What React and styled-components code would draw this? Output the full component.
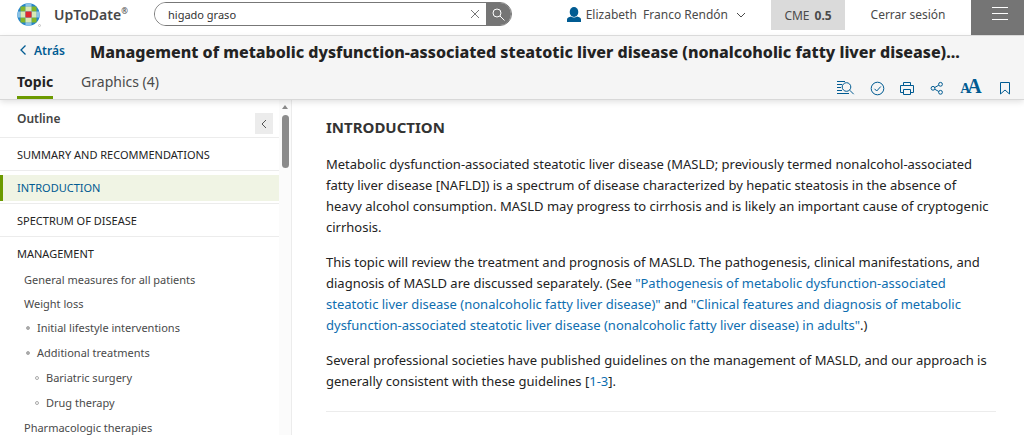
import React from "react";
import styled, { createGlobalStyle } from "styled-components";

const GlobalStyle = createGlobalStyle`
  * {
    box-sizing: border-box;
  }
  body {
    margin: 0;
    background: #fff;
    color: #232323;
    font-family: "Noto Sans", "Open Sans", sans-serif;
    font-size: 13px;
  }
  button {
    border: 0;
    padding: 0;
    background: none;
    color: inherit;
    font: inherit;
    cursor: pointer;
  }
  a {
    color: #005b92;
    text-decoration: none;
  }
  ul {
    list-style: none;
    margin: 0;
    padding: 0;
  }
  svg {
    display: block;
    flex: none;
  }
`;

const Page = styled.div`
  display: flex;
  flex-direction: column;
  height: 100vh;
  overflow: hidden;
`;

const TopBar = styled.header`
  display: flex;
  align-items: flex-start;
  height: 36px;
  flex: none;
  border-bottom: 1px solid #e0e0e0;
  color: #4a4a4a;
`;

const Brand = styled.a`
  display: flex;
  align-items: center;
  gap: 13px;
  width: 154px;
  height: 29px;
  padding-left: 17px;
  color: #474747;
  font-size: 14px;
  font-weight: 600;
  sup {
    font-size: 8px;
    line-height: 12px;
    vertical-align: top;
  }
`;

const SearchForm = styled.form`
  display: flex;
  width: 35%;
  height: 24px;
  margin-top: 2px;
  border: 1px solid #777;
  border-radius: 12px;
  overflow: hidden;
`;

const SearchInput = styled.input`
  flex: 1;
  min-width: 0;
  border: 0;
  outline: 0;
  padding: 0 0 0 13px;
  color: #333;
  font-family: inherit;
  font-size: 11px;
`;

const ClearButton = styled.button`
  display: grid;
  place-items: center;
  width: 22px;
  color: #777;
`;

const SearchButton = styled.button`
  display: grid;
  place-items: center;
  width: 25px;
  background: #757575;
  color: #fff;
`;

const Account = styled.div`
  display: flex;
  align-items: flex-start;
  margin-left: auto;
`;

const UserButton = styled.button`
  display: flex;
  align-items: center;
  gap: 5px;
  height: 28px;
  margin-right: 24px;
  font-size: 12px;
  white-space: pre;
`;

const Credits = styled.a`
  display: flex;
  align-items: center;
  justify-content: center;
  gap: 5px;
  width: 74px;
  height: 30px;
  background: #dadada;
  color: #4a4a4a;
  font-size: 12px;
`;

const SignOut = styled.button`
  width: 126px;
  height: 28px;
  font-size: 12px;
`;

const MenuButton = styled.button`
  display: flex;
  justify-content: center;
  width: 53px;
  height: 35px;
  padding: 6px 0 0 4px;
  background: #757575;
  color: #fff;
`;

const TopicHeader = styled.div`
  position: relative;
  flex: none;
  background: #f5f5f5;
  border-bottom: 1px solid #d8d8d8;
  box-shadow: 0 2px 6px rgba(0, 0, 0, 0.12);
`;

const TitleRow = styled.div`
  display: flex;
  height: 32px;
  padding-left: 18px;
`;

const BackButton = styled.button`
  display: flex;
  align-items: center;
  gap: 6px;
  width: 72px;
  height: 28px;
  color: #005b92;
  font-size: 12px;
  font-weight: 600;
`;

const TopicTitle = styled.h1`
  margin: 0;
  font-size: 16px;
  font-weight: 800;
  line-height: 32px;
  white-space: nowrap;
`;

const TabRow = styled.div`
  display: flex;
  justify-content: space-between;
  height: 31px;
  padding: 0 11px 0 17px;
`;

const Tabs = styled.div`
  display: flex;
  gap: 28px;
`;

const Tab = styled.button`
  padding-bottom: 2px;
  border-bottom: 3px solid ${(props) => (props.$active ? "#6c9a00" : "transparent")};
  color: ${(props) => (props.$active ? "#232323" : "#4a4a4a")};
  font-size: 14px;
  font-weight: ${(props) => (props.$active ? 700 : 400)};
`;

const Tools = styled.div`
  display: flex;
  align-items: center;
  gap: 14px;
  padding-top: 8px;
  color: #005b92;
`;

const FontSizeButton = styled.button`
  width: 24px;
  font-family: "Liberation Serif", serif;
  font-size: 20px;
  font-weight: 700;
  line-height: 16px;
  white-space: nowrap;
  small {
    margin-right: -3px;
    font-size: 14px;
  }
`;

const Main = styled.div`
  display: flex;
  flex: 1;
  min-height: 0;
`;

const Sidebar = styled.aside`
  display: flex;
  width: 292px;
  flex: none;
  border-right: 1px solid #ececec;
`;

const Outline = styled.nav`
  flex: 1;
  overflow: hidden;
`;

const OutlineHead = styled.div`
  display: flex;
  justify-content: space-between;
  height: 38px;
  padding: 0 6px 0 17px;
  border-bottom: 1px solid #ececec;
`;

const OutlineTitle = styled.h2`
  margin: 0;
  color: #444;
  font-size: 12px;
  font-weight: 600;
  line-height: 38px;
`;

const CollapseButton = styled.button`
  display: grid;
  place-items: center;
  width: 18px;
  height: 21px;
  margin-top: 13px;
  background: #ececec;
  color: #555;
`;

const Section = styled.li`
  padding: 4px 0 2px;
  border-bottom: 1px solid ${(props) => (props.$open ? "transparent" : "#ececec")};
`;

const SectionLink = styled.a`
  display: block;
  padding-left: ${(props) => (props.$active ? 14 : 17)}px;
  border-left: ${(props) => (props.$active ? "3px solid #6c9a00" : "0")};
  background: ${(props) => (props.$active ? "#f0f4e4" : "transparent")};
  color: ${(props) => (props.$active ? "#005b92" : "#232323")};
  font-size: 11px;
  line-height: 26px;
`;

const indents = [24, 26, 35];

const SubItem = styled.li`
  display: flex;
  align-items: center;
  gap: 7px;
  height: ${(props) => (props.$level ? 25 : 24)}px;
  padding-left: ${(props) => indents[props.$level]}px;
  a {
    color: #4a4a4a;
    font-size: 11px;
  }
`;

const Bullet = styled.span`
  width: 4px;
  height: 4px;
  border: 1px solid #aaa;
  border-radius: 50%;
  background: ${(props) => (props.$hollow ? "#fff" : "#aaa")};
`;

const ScrollTrack = styled.div`
  display: flex;
  flex-direction: column;
  align-items: center;
  gap: 6px;
  width: 12px;
  padding-top: 5px;
  background: #fbfbfb;
  color: #8a8a8a;
`;

const ScrollThumb = styled.div`
  width: 7px;
  height: 53px;
  border-radius: 4px;
  background: #8b8b8b;
`;

const Article = styled.article`
  flex: 1;
  min-width: 0;
  padding: 17px 28px 0 34px;
  overflow: hidden;
  h2 {
    margin: 0 0 16px;
    color: #333;
    font-size: 15px;
    font-weight: 700;
    line-height: 21px;
  }
  p {
    margin: 0 0 14px;
    padding-right: 4px;
    line-height: 21px;
  }
  a {
    color: #0e6eb0;
  }
`;

const Divider = styled.hr`
  margin: 19px 0 0;
  border: 0;
  border-top: 1px solid #ececec;
`;

const sections = [
  { title: "SUMMARY AND RECOMMENDATIONS" },
  { title: "INTRODUCTION", active: true },
  { title: "SPECTRUM OF DISEASE" },
  { title: "MANAGEMENT", open: true },
];

const managementItems = [
  { title: "General measures for all patients", level: 0 },
  { title: "Weight loss", level: 0 },
  { title: "Initial lifestyle interventions", level: 1 },
  { title: "Additional treatments", level: 1 },
  { title: "Bariatric surgery", level: 2 },
  { title: "Drug therapy", level: 2 },
  { title: "Pharmacologic therapies", level: 0 },
];

const Icon = ({ width = 16, height = 16, children }) => (
  <svg
    width={width}
    height={height}
    viewBox={`0 0 ${width} ${height}`}
    fill="none"
    stroke="currentColor"
    aria-hidden="true"
  >
    {children}
  </svg>
);

const Logo = () => (
  <svg width="24" height="24" viewBox="0 0 24 24" aria-hidden="true">
    <defs>
      <clipPath id="globe">
        <circle cx="11.5" cy="11.5" r="11.3" />
      </clipPath>
    </defs>
    <g clipPath="url(#globe)">
      <path fill="#2786c8" d="M0 0h24v24H0z" />
      <path fill="#8cc3e6" d="M8.500 0h6v3.500h-6zM8.500 19.500h6V23h-6zM0 8.500h3.500v6H0zM19.500 8.500H23v6h-3.500z" />
      <path fill="#84b526" d="M3.500 3.500h5v5h-5zM14.500 3.500h5v5h-5zM3.500 14.500h5v5h-5zM14.500 14.500h5v5h-5z" />
      <path fill="#d9e8b4" d="M3.500 8.500h5v6h-5zM14.500 8.500h5v6h-5zM8.500 3.500h6v5h-6zM8.500 14.500h6v5h-6z" />
      <path fill="#e0272f" d="M8.500 8.500h6v6h-6z" />
    </g>
    <circle cx="22.500" cy="22.500" r="1" fill="none" stroke="#999" strokeWidth=".5" />
  </svg>
);

function Header() {
  return (
    <TopBar>
      <Brand href="#home">
        <Logo />
        <span>
          UpToDate<sup>®</sup>
        </span>
      </Brand>
      <SearchForm role="search" onSubmit={(e) => e.preventDefault()}>
        <SearchInput aria-label="Buscar" defaultValue="higado graso" />
        <ClearButton type="reset" aria-label="Borrar">
          <Icon width={10} height={10}>
            <path d="M1 1l8 8M9 1L1 9" />
          </Icon>
        </ClearButton>
        <SearchButton aria-label="Buscar">
          <Icon width={13} height={13}>
            <circle cx="5" cy="5" r="4" />
            <path d="M8 8l4.500 4.500" />
          </Icon>
        </SearchButton>
      </SearchForm>
      <Account>
        <UserButton>
          <svg width="14" height="15" viewBox="0 0 14 15" fill="#005b92" aria-hidden="true">
            <ellipse cx="7" cy="5" rx="4.300" ry="5" />
            <path d="M0 15v-2.500C0 10.500 2 10 4 9.500c2 1.300 4 1.300 6 0 2 .5 4 1 4 3V15z" />
          </svg>
          {"Elizabeth  Franco Rendón"}
          <Icon width={14} height={10}>
            <path d="M4 4l4 4 4-4" />
          </Icon>
        </UserButton>
        <Credits href="#cme">
          CME <b>0.5</b>
        </Credits>
        <SignOut>Cerrar sesión</SignOut>
        <MenuButton aria-label="Menú">
          <Icon width={18} height={16}>
            <path d="M1 1.500h16M1 7.500h16M1 13.500h16" />
          </Icon>
        </MenuButton>
      </Account>
    </TopBar>
  );
}

function TopicTools() {
  return (
    <Tools>
      <button aria-label="Find in topic">
        <Icon width={19} height={16}>
          <path d="M1 1.500h8M1 4.500h5M1 7.500h4M1 10.500h5M1 13.500h12" />
          <circle cx="10.500" cy="7" r="4.300" />
          <path d="M13.700 10.200l4 4" />
        </Icon>
      </button>
      <button aria-label="Mark as read">
        <Icon>
          <circle cx="8.500" cy="8.500" r="6.300" />
          <path d="M5.500 8.800l2.200 2.200L11.800 6.500" />
        </Icon>
      </button>
      <button aria-label="Print">
        <Icon>
          <path d="M4.500 5.500v-3h7v3M4 12.500H1.500v-7h13v7H12" />
          <path d="M4.500 9.500h7v5h-7z" />
        </Icon>
      </button>
      <button aria-label="Share">
        <Icon>
          <circle cx="4" cy="8.300" r="1.900" />
          <circle cx="11.500" cy="4.300" r="1.900" />
          <circle cx="11.500" cy="12.300" r="1.900" />
          <path d="M5.700 7.500l4.100-2.300M5.700 9.200l4.100 2.300" />
        </Icon>
      </button>
      <FontSizeButton aria-label="Font size">
        <small>A</small>A
      </FontSizeButton>
      <button aria-label="Bookmark">
        <Icon>
          <path d="M3.500 2.500h9v11.500L8 10l-4.500 4z" />
        </Icon>
      </button>
    </Tools>
  );
}

function OutlinePanel() {
  return (
    <Sidebar>
      <Outline aria-label="Outline">
        <OutlineHead>
          <OutlineTitle>Outline</OutlineTitle>
          <CollapseButton aria-label="Collapse outline">
            <Icon width={6} height={10}>
              <path d="M5 1L1 5l4 4" />
            </Icon>
          </CollapseButton>
        </OutlineHead>
        <ul>
          {sections.map((section) => (
            <Section key={section.title} $open={section.open}>
              <SectionLink href="#section" $active={section.active}>
                {section.title}
              </SectionLink>
              {section.open && (
                <ul>
                  {managementItems.map((item) => (
                    <SubItem key={item.title} $level={item.level}>
                      {item.level > 0 && <Bullet $hollow={item.level === 2} />}
                      <a href="#section">{item.title}</a>
                    </SubItem>
                  ))}
                </ul>
              )}
            </Section>
          ))}
        </ul>
      </Outline>
      <ScrollTrack>
        <svg width="6" height="4" viewBox="0 0 6 4" fill="currentColor" aria-hidden="true">
          <path d="M0 4l3-4 3 4z" />
        </svg>
        <ScrollThumb />
      </ScrollTrack>
    </Sidebar>
  );
}

function App() {
  return (
    <Page>
      <GlobalStyle />
      <Header />
      <TopicHeader>
        <TitleRow>
          <BackButton>
            <Icon width={10} height={12}>
              <path d="M7.500 1.500L3 6l4.500 4.500" strokeWidth="1.300" />
            </Icon>
            Atrás
          </BackButton>
          <TopicTitle>
            Management of metabolic dysfunction-associated steatotic liver disease
            (nonalcoholic fatty liver disease)...
          </TopicTitle>
        </TitleRow>
        <TabRow>
          <Tabs>
            <Tab $active>Topic</Tab>
            <Tab>Graphics (4)</Tab>
          </Tabs>
          <TopicTools />
        </TabRow>
      </TopicHeader>
      <Main>
        <OutlinePanel />
        <Article>
          <h2>INTRODUCTION</h2>
          <p>
            Metabolic dysfunction-associated steatotic liver disease (MASLD; previously
            termed nonalcohol-associated fatty liver disease [NAFLD]) is a spectrum of
            disease characterized by hepatic steatosis in the absence of heavy alcohol
            consumption. MASLD may progress to cirrhosis and is likely an important cause
            of cryptogenic cirrhosis.
          </p>
          <p>
            This topic will review the treatment and prognosis of MASLD. The pathogenesis,
            clinical manifestations, and diagnosis of MASLD are discussed separately. (See{" "}
            <a href="#pathogenesis">
              "Pathogenesis of metabolic dysfunction-associated steatotic liver disease
              (nonalcoholic fatty liver disease)"
            </a>{" "}
            and{" "}
            <a href="#clinical-features">
              "Clinical features and diagnosis of metabolic dysfunction-associated
              steatotic liver disease (nonalcoholic fatty liver disease) in adults"
            </a>
            .)
          </p>
          <p>
            Several professional societies have published guidelines on the management of
            MASLD, and our approach is generally consistent with these guidelines [
            <a href="#references">1-3</a>].
          </p>
          <Divider />
        </Article>
      </Main>
    </Page>
  );
}

export default App;
